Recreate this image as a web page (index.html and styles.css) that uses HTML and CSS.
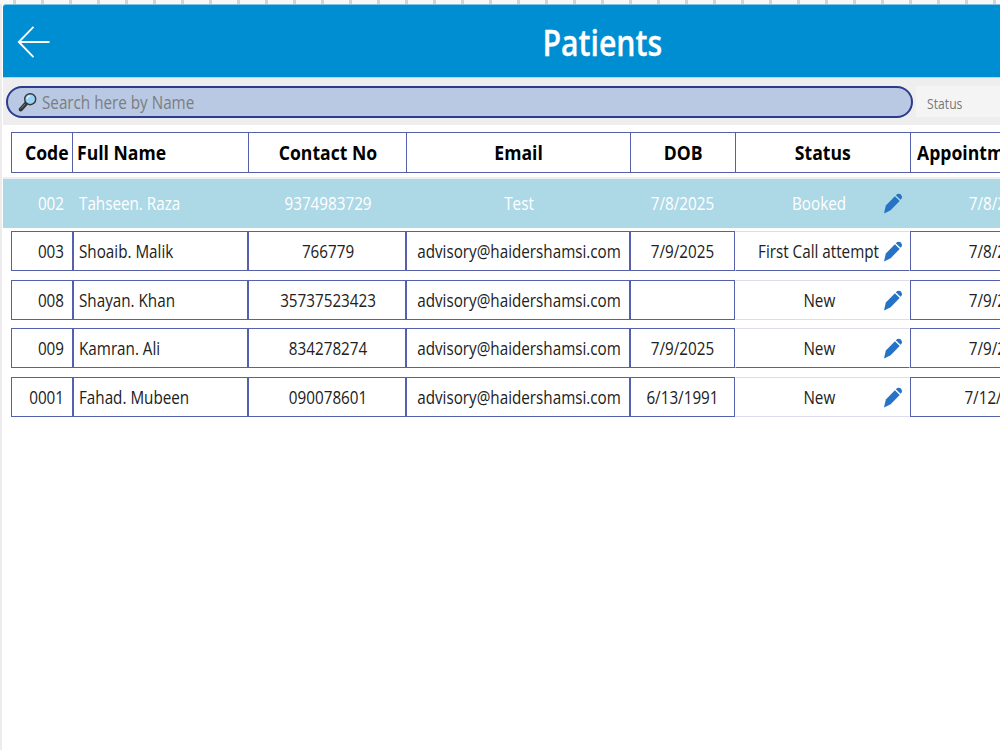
FILE: index.html
```
<!DOCTYPE html>
<html lang="en">
  <head>
    <meta charset="UTF-8">
    <title>Patients</title>
    <link rel="stylesheet" href="styles.css">
  </head>
  <body>
    <!-- Shared icons -->
    <svg class="sprite">
      <symbol id="pencil" viewBox="0 0 20 22">
        <path d="M12 3.4 17 8.3 7.5 18 1.2 21.2Q.6 21.4 .7 20.7L2.5 13.2Z"/>
        <path d="M13 2.4 14.4 1.1Q16.4 0 18.3 1.7 20 3.8 18.9 5.9L17.9 7.2Z"/>
      </symbol>
    </svg>
    <div id="ruler"></div>
    <div id="screen">
      <!-- Title bar -->
      <header class="titlebar">
        <svg class="back" viewBox="0 0 34 34"><path d="M16.5 1.8 1.8 17 16.5 32.2M1.8 17H32.5"/></svg>
        <h1><span>Patients</span></h1>
      </header>
      <!-- Search and status filter -->
      <div class="filters">
        <div class="search">
          <svg class="glass" viewBox="0 0 20 20">
            <path class="handle" d="M2.8 17.4 8 11.6"/>
            <path class="shine" d="M3 16.5 7.2 11.8"/>
            <circle cx="12.2" cy="7.2" r="5.5"/>
            <path class="glint" d="M9 7Q9.4 4.2 12.2 3.8"/>
          </svg>
          <span>Search here by Name</span>
        </div>
        <div class="status-filter"><span>Status</span></div>
      </div>
      <!-- Patient table -->
      <div class="row head">
        <div class="code"><span>Code</span></div>
        <div class="name"><span>Full Name</span></div>
        <div><span>Contact No</span></div>
        <div><span>Email</span></div>
        <div><span>DOB</span></div>
        <div><span>Status</span></div>
        <div class="appt"><span>Appointment</span></div>
      </div>
      <div class="row selected">
        <div class="code"><span>002</span></div>
        <div class="name"><span>Tahseen. Raza</span></div>
        <div><span>9374983729</span></div>
        <div><span>Test</span></div>
        <div class="dob"><span>7/8/2025</span></div>
        <div class="status"><span>Booked</span><svg><use href="#pencil"/></svg></div>
        <div><span>7/8/2025</span></div>
      </div>
      <div class="row">
        <div class="code"><span>003</span></div>
        <div class="name"><span>Shoaib. Malik</span></div>
        <div><span>766779</span></div>
        <div><span>advisory@haidershamsi.com</span></div>
        <div class="dob"><span>7/9/2025</span></div>
        <div class="status strong"><span>First Call attempt</span><svg><use href="#pencil"/></svg></div>
        <div><span>7/8/2025</span></div>
      </div>
      <div class="row">
        <div class="code"><span>008</span></div>
        <div class="name"><span>Shayan. Khan</span></div>
        <div><span>35737523423</span></div>
        <div><span>advisory@haidershamsi.com</span></div>
        <div class="dob"></div>
        <div class="status"><span>New</span><svg><use href="#pencil"/></svg></div>
        <div><span>7/9/2025</span></div>
      </div>
      <div class="row">
        <div class="code"><span>009</span></div>
        <div class="name"><span>Kamran. Ali</span></div>
        <div><span>834278274</span></div>
        <div><span>advisory@haidershamsi.com</span></div>
        <div class="dob"><span>7/9/2025</span></div>
        <div class="status strong"><span>New</span><svg><use href="#pencil"/></svg></div>
        <div><span>7/9/2025</span></div>
      </div>
      <div class="row">
        <div class="code"><span>0001</span></div>
        <div class="name"><span>Fahad. Mubeen</span></div>
        <div><span>090078601</span></div>
        <div><span>advisory@haidershamsi.com</span></div>
        <div class="dob"><span>6/13/1991</span></div>
        <div class="status"><span>New</span><svg><use href="#pencil"/></svg></div>
        <div><span>7/12/2025</span></div>
      </div>
    </div>
  </body>
</html>
```
FILE: styles.css
```
* {
  box-sizing: border-box;
}
body {
  margin: 0;
  height: 750px;
  overflow: hidden;
  background-color: #f8f8f8;
  font-family: "Open Sans", sans-serif;
  font-size: 17.5px;
  color: #212121;
}
span {
  display: inline-block;
  white-space: nowrap;
  transform: scaleX(0.87);
}
.sprite {
  display: none;
}
#ruler {
  height: 4px;
  background: repeating-linear-gradient(90deg, transparent 0 13px, #d5d5d5 13px 16px, transparent 16px 28px);
}
#screen {
  width: 1202px;
  height: 746px;
  padding-left: 3px;
  background: linear-gradient(90deg, #ececec 2px, #fff 2px);
}
.titlebar {
  display: flex;
  align-items: center;
  height: 74px;
  border-top: 1px solid #7fc4e6;
  border-bottom: 1px solid #a9d9f0;
  border-top-left-radius: 3px;
  background-color: #008ed2;
  color: #fff;
}
.back {
  width: 34px;
  height: 34px;
  margin: 1px 0 0 13.5px;
  fill: none;
  stroke: #fff;
  stroke-width: 1.9;
}
h1 {
  flex: 1;
  margin: 4px 47px 0 0;
  text-align: center;
  font-size: 36px;
  font-weight: 600;
  line-height: 72px;
}
h1 span {
  transform: scaleX(0.84);
  -webkit-text-stroke: 0.3px #fff;
}
.filters {
  display: flex;
  height: 47px;
  padding: 8px 0 7px 3px;
  background-color: #eee;
}
.search {
  display: flex;
  align-items: center;
  width: 907px;
  height: 32px;
  padding-left: 10px;
  border: 2px solid #2c3b8d;
  border-radius: 16px;
  background-color: #b9c9e3;
  color: #7b7d80;
}
.search span {
  transform-origin: left;
  margin-left: 4px;
}
.glass {
  width: 20px;
  height: 20px;
  fill: #9bd3f5;
  stroke: #30363b;
  stroke-width: 1.4;
}
.glass .handle {
  stroke-width: 4;
  stroke-linecap: round;
}
.glass .shine {
  stroke: #78828a;
  stroke-width: 1;
}
.glass .glint {
  fill: none;
  stroke: #e4f5ff;
  stroke-width: 1.2;
}
.status-filter {
  flex: 1;
  height: 31px;
  margin-left: 3px;
  padding-left: 11px;
  background-color: #f4f4f4;
  color: #777;
  font-size: 14px;
  line-height: 35px;
}
.status-filter span {
  transform-origin: left;
}
.row {
  display: grid;
  grid-template-columns: 62px 175px 158px 224px 105px 175px 178px;
  height: 48.5px;
  padding: 3.5px 0 5px 8px;
}
.row > div {
  display: flex;
  align-items: center;
  justify-content: center;
  min-width: 0;
  padding-left: 2px;
  border: 1px solid #5660ab;
}
.row .code {
  justify-content: flex-end;
  padding-right: 8px;
}
.code span {
  transform-origin: right;
}
.row .name {
  justify-content: flex-start;
  padding-left: 5px;
}
.row .dob {
  padding-left: 0;
}
.name span {
  transform-origin: left;
}
.row .status {
  position: relative;
  padding-right: 9px;
  border-color: #dcdcee;
  border-left-color: transparent;
  border-right-color: transparent;
}
.row .strong {
  border-bottom-color: #5660ab;
}
.status svg {
  position: absolute;
  right: 6px;
  top: 9px;
  width: 20px;
  height: 21px;
  fill: #2672c6;
}
.head {
  height: 54px;
  padding: 7px 0 4px 8px;
  border-bottom: 2px solid #eee;
  font-weight: 700;
  font-size: 20px;
  color: #000;
}
.head > div {
  padding-left: 0;
  border-right-width: 0;
}
.head span {
  transform: scaleX(0.88);
}
.head .code {
  padding-right: 4px;
}
.head .name {
  margin-left: -1px;
  padding-left: 4px;
}
.head .appt {
  justify-content: flex-start;
  padding-left: 6px;
}
.appt span {
  transform-origin: left;
}
.selected {
  background-color: #add8e6;
  color: #fff;
}
.row.selected > div {
  border-color: transparent;
}
```
